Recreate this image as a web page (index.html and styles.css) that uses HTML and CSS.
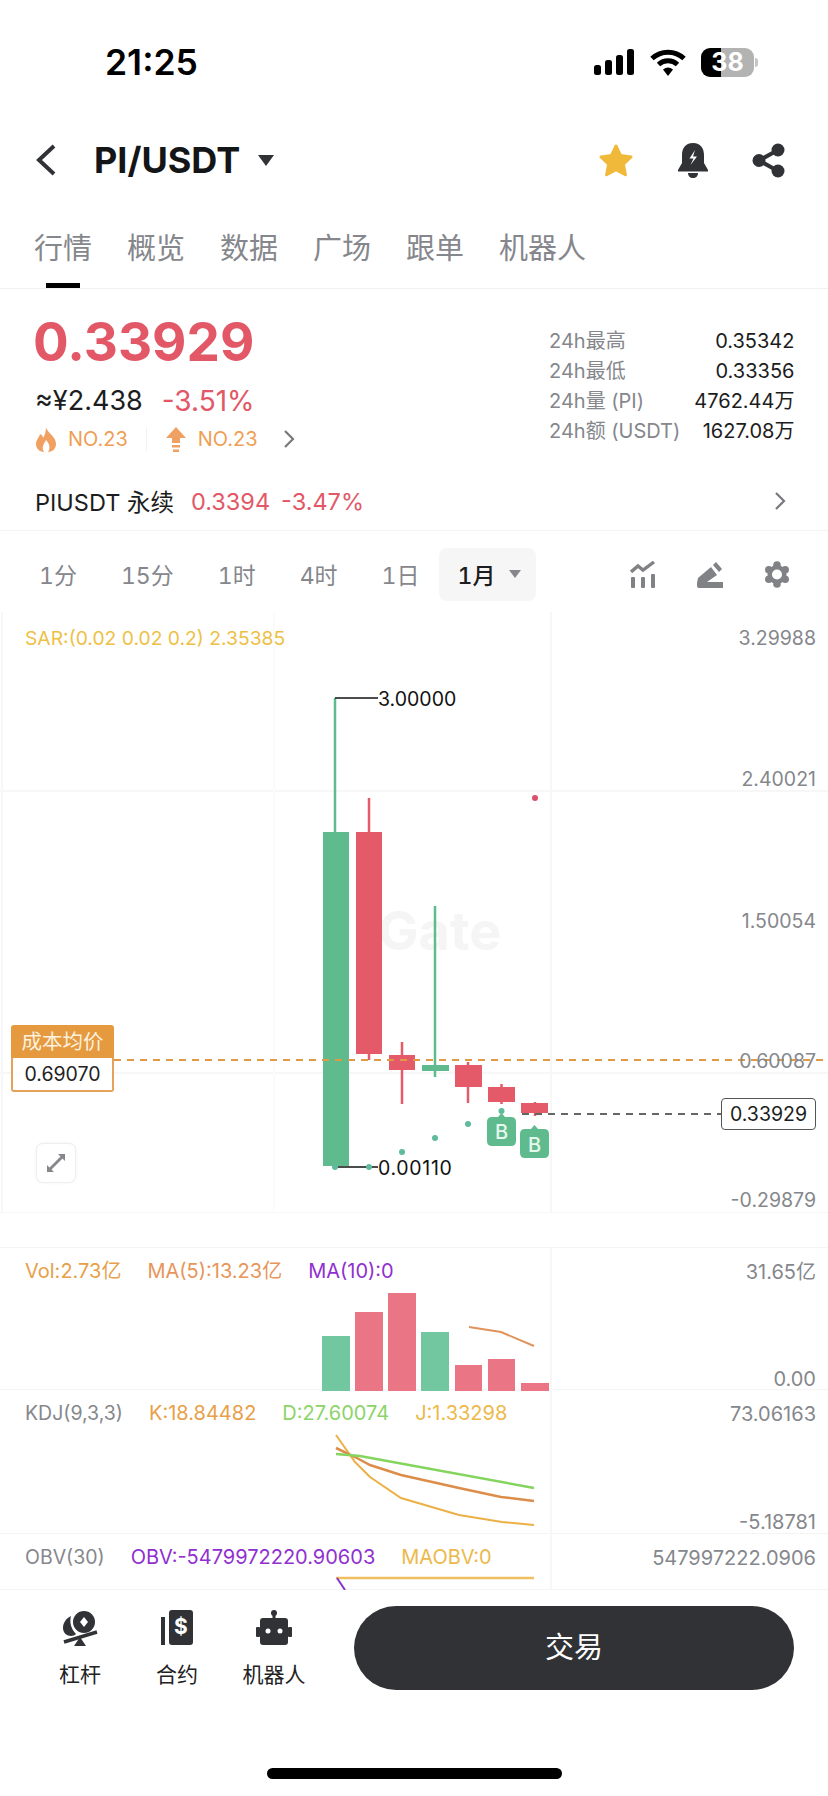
FILE: index.html
```html
<!DOCTYPE html>
<html lang="zh">
<head>
    <meta charset="UTF-8">
    <meta name="viewport" content="width=device-width, initial-scale=1.0">
    <title>PI/USDT</title>
    <link rel="stylesheet" href="styles.css">
</head>
<body>
    <div class="page">
        <div class="status">
            <span class="time">21:25</span>
            <div class="status-icons">
                <svg width="41" height="26" viewBox="0 0 41 26"><rect x="0" y="16" width="7" height="10" rx="2.5"/><rect x="11" y="11" width="7" height="15" rx="2.5"/><rect x="22" y="6" width="7" height="20" rx="2.5"/><rect x="33" y="0" width="7" height="26" rx="2.5"/></svg>
                <svg width="36" height="27" viewBox="0 0 36 27"><path d="M2 9.5C11 1 25 1 34 9.5" fill="none" stroke="#000" stroke-width="5"/><path d="M8.5 15.5C14 10.5 22 10.5 27.5 15.5" fill="none" stroke="#000" stroke-width="5"/><path d="M13 20.5Q18 16.5 23 20.5L18 27Z"/></svg>
                <div class="battery"><span class="battery-num">38</span></div>
                <span class="battery-nub"></span>
            </div>
        </div>

        <div class="nav">
            <svg class="back" width="22" height="32" viewBox="0 0 22 32"><path d="M19 2L4 16L19 30" fill="none" stroke="#303236" stroke-width="4"/></svg>
            <span class="pair">PI/USDT</span>
            <span class="caret"></span>
            <div class="nav-icons">
                <svg width="36" height="35" viewBox="0 0 36 35"><path d="M18 3L22.6 12.6L33 14L25.4 21.2L27.4 31.8L18 26.6L8.6 31.8L10.6 21.2L3 14L13.4 12.6Z" fill="#f0b93a" stroke="#f0b93a" stroke-width="3" stroke-linejoin="round"/></svg>
                <svg width="32" height="35" viewBox="0 0 32 35"><path d="M16 0C8 0 5 6 5 12V20L1 27V28.5H31V27L27 20V12C27 6 24 0 16 0Z" fill="#303236"/><path d="M11 30H21C21 33 19 35 16 35S11 33 11 30Z" fill="#303236"/><path d="M18 7L12.5 15.5H16.5L13.5 22L20 13.5H16Z" fill="#fff"/></svg>
                <svg width="33" height="35" viewBox="0 0 33 35"><path d="M26 7L7 17.5L26 28" fill="none" stroke="#303236" stroke-width="4"/><circle cx="26" cy="7" r="6.5" fill="#303236"/><circle cx="26" cy="28" r="6.5" fill="#303236"/><circle cx="7" cy="17.5" r="6.5" fill="#303236"/></svg>
            </div>
        </div>

        <div class="tabs">
            <span class="tab tab-active">行情</span>
            <span class="tab">概览</span>
            <span class="tab">数据</span>
            <span class="tab">广场</span>
            <span class="tab">跟单</span>
            <span class="tab">机器人</span>
        </div>

        <div class="summary">
            <div>
                <div class="price">0.33929</div>
                <div class="price-sub">
                    <span>≈¥2.438</span>
                    <span class="red">-3.51%</span>
                </div>
                <div class="rank">
                    <svg width="22" height="25" viewBox="0 0 22 25"><path d="M11 0C12 6 21 9 21 17C21 22 17 25 13 25C16 21 14 16 11 13C9 17 6 20 9 25C4 25 1 21 1 17C1 13 4 11 5 7C7 8 8 9 8 11C10 8 11 4 11 0Z" fill="#f0a060"/></svg>
                    <span>NO.23</span>
                    <span class="rank-sep"></span>
                    <svg width="22" height="25" viewBox="0 0 22 25"><path d="M11 0L21 11H15V16H7V11H1Z" fill="#f0a060"/><rect x="7" y="18" width="8" height="2.5" fill="#f0a060"/><rect x="8" y="22.5" width="6" height="2.5" fill="#f0a060"/></svg>
                    <span>NO.23</span>
                    <svg class="rank-more" width="13" height="18" viewBox="0 0 13 18"><path d="M2 1L10 9L2 17" fill="none" stroke="#77797e" stroke-width="2.2"/></svg>
                </div>
            </div>
            <div class="stats">
                <span class="stat-label">24h最高</span><span class="stat-value">0.35342</span>
                <span class="stat-label">24h最低</span><span class="stat-value">0.33356</span>
                <span class="stat-label">24h量 (PI)</span><span class="stat-value">4762.44万</span>
                <span class="stat-label">24h额 (USDT)</span><span class="stat-value">1627.08万</span>
            </div>
        </div>

        <div class="perp">
            <span class="perp-name">PIUSDT 永续</span>
            <span class="red">0.3394</span>
            <span class="red">-3.47%</span>
            <svg class="perp-more" width="13" height="18" viewBox="0 0 13 18"><path d="M2 1L10 9L2 17" fill="none" stroke="#77797e" stroke-width="2.2"/></svg>
        </div>

        <div class="intervals">
            <span>1分</span>
            <span>15分</span>
            <span>1时</span>
            <span>4时</span>
            <span>1日</span>
            <span class="interval-active">1月<i class="caret caret-small"></i></span>
            <div class="chart-tools">
                <svg width="26" height="27" viewBox="0 0 26 27"><path d="M1 11L8 5L13 9L24 1" fill="none" stroke="#808285" stroke-width="3.4"/><rect x="1" y="16" width="4" height="11" rx="1" fill="#808285"/><rect x="11" y="16" width="4" height="11" rx="1" fill="#808285"/><rect x="21" y="13" width="4" height="14" rx="1" fill="#808285"/></svg>
                <svg width="26" height="27" viewBox="0 0 26 27"><path d="M0 22L1 17L14 6L20 14L10 21H26V27H2Q0 27 0 25Z" fill="#808285"/><path d="M16 4L19 1L25 8L22 11Z" fill="#808285"/></svg>
                <svg width="26" height="27" viewBox="0 0 26 27"><g fill="#808285"><circle cx="13" cy="13.500" r="9.500"/><circle cx="13" cy="4" r="3.800"/><circle cx="13" cy="23" r="3.800"/><circle cx="4.800" cy="8.700" r="3.800"/><circle cx="21.200" cy="8.700" r="3.800"/><circle cx="4.800" cy="18.300" r="3.800"/><circle cx="21.200" cy="18.300" r="3.800"/></g><circle cx="13" cy="13.500" r="5" fill="#fff"/></svg>
            </div>
        </div>

        <div class="chart">
            <svg class="chart-layer" width="828" height="601" viewBox="0 612 828 601">
                <g stroke="#f7f7f7" stroke-width="2">
                    <line x1="0" y1="791" x2="828" y2="791"/>
                    <line x1="0" y1="1073" x2="828" y2="1073"/>
                    <line x1="0" y1="1213" x2="828" y2="1213"/>
                    <line x1="2" y1="612" x2="2" y2="1213"/>
                    <line x1="274" y1="612" x2="274" y2="1213" stroke="#fbfbfb"/>
                    <line x1="551" y1="612" x2="551" y2="1213"/>
                </g>
                <text class="watermark" x="378" y="950">Gate</text>

                <line x1="335" y1="698" x2="335" y2="832" stroke="#5fbb8d" stroke-width="2.500"/>
                <rect x="323" y="832" width="26" height="334" fill="#5fbb8d"/>
                <line x1="369" y1="798" x2="369" y2="1060" stroke="#e55a68" stroke-width="2.500"/>
                <rect x="356" y="832" width="26" height="222" fill="#e55a68"/>
                <line x1="402" y1="1042" x2="402" y2="1104" stroke="#e55a68" stroke-width="2.500"/>
                <rect x="389" y="1055" width="26" height="15" fill="#e55a68"/>
                <line x1="435" y1="906" x2="435" y2="1077" stroke="#5fbb8d" stroke-width="2.500"/>
                <rect x="422" y="1065" width="27" height="6" fill="#5fbb8d"/>
                <line x1="468" y1="1062" x2="468" y2="1103" stroke="#e55a68" stroke-width="2.500"/>
                <rect x="455" y="1065" width="27" height="22" fill="#e55a68"/>
                <line x1="501.500" y1="1084" x2="501.500" y2="1104" stroke="#e55a68" stroke-width="2.500"/>
                <rect x="488" y="1087" width="27" height="15" fill="#e55a68"/>
                <line x1="535" y1="1102" x2="535" y2="1116" stroke="#e55a68" stroke-width="2.500"/>
                <rect x="521" y="1103" width="27" height="10" fill="#e55a68"/>

                <line x1="335" y1="698" x2="378" y2="698" stroke="#111" stroke-width="1.500"/>
                <line x1="335" y1="1167" x2="378" y2="1167" stroke="#111" stroke-width="1.500"/>

                <g fill="#5fbb9a">
                    <circle cx="335" cy="1167" r="3"/>
                    <circle cx="369" cy="1167" r="3"/>
                    <circle cx="402" cy="1152" r="3"/>
                    <circle cx="435" cy="1138" r="3"/>
                    <circle cx="468" cy="1124" r="3"/>
                    <circle cx="501.500" cy="1111" r="3"/>
                </g>
                <circle cx="535" cy="798" r="3" fill="#d9506a"/>

                <line x1="114" y1="1060" x2="828" y2="1060" stroke="#e09a45" stroke-width="2" stroke-dasharray="7 6"/>
                <line x1="522" y1="1114" x2="721" y2="1114" stroke="#666" stroke-width="2" stroke-dasharray="7 6"/>

                <g fill="#5fbb8d">
                    <path d="M501.500 1113L505 1117H511Q516 1117 516 1122V1141Q516 1146 511 1146H492Q487 1146 487 1141V1122Q487 1117 492 1117H498Z"/>
                    <path d="M534.500 1125L538 1129H544Q549 1129 549 1134V1153Q549 1158 544 1158H525Q520 1158 520 1153V1134Q520 1129 525 1129H531Z"/>
                </g>
                <text class="badge-text" x="501.500" y="1139">B</text>
                <text class="badge-text" x="534.500" y="1151.500">B</text>
            </svg>

            <span class="legend-sar">SAR:(0.02 0.02 0.2) 2.35385</span>
            <span class="scale scale-1">3.29988</span>
            <span class="scale scale-2">2.40021</span>
            <span class="scale scale-3">1.50054</span>
            <span class="scale scale-4">0.60087</span>
            <span class="scale scale-5">-0.29879</span>
            <span class="extreme extreme-high">3.00000</span>
            <span class="extreme extreme-low">0.00110</span>
            <span class="last-price">0.33929</span>
            <div class="cost">
                <div class="cost-title">成本均价</div>
                <div class="cost-value">0.69070</div>
            </div>
            <div class="expand">
                <svg width="20" height="20" viewBox="0 0 20 20"><path d="M12 1H19V8L16.500 5.500L5.500 16.500L8 19H1V12L3.500 14.500L14.500 3.500Z" fill="#85878a"/></svg>
            </div>
        </div>

        <div class="pane pane-vol">
            <svg class="chart-layer" width="828" height="143" viewBox="0 1247 828 143">
                <line x1="551" y1="1247" x2="551" y2="1390" stroke="#f7f7f7" stroke-width="2"/>
                <rect x="322" y="1335" width="28" height="55" fill="#72c6a0"/>
                <rect x="355" y="1311" width="28" height="79" fill="#e97585"/>
                <rect x="388" y="1292" width="28" height="98" fill="#e97585"/>
                <rect x="421" y="1331" width="28" height="59" fill="#72c6a0"/>
                <rect x="455" y="1364" width="27" height="26" fill="#e97585"/>
                <rect x="488" y="1358" width="27" height="32" fill="#e97585"/>
                <rect x="521" y="1382" width="28" height="8" fill="#e97585"/>
                <path d="M469 1326L501 1331L534 1345" fill="none" stroke="#e0935a" stroke-width="2"/>
            </svg>
            <div class="legend">
                <span class="c-orange">Vol:2.73亿</span>
                <span class="c-salmon">MA(5):13.23亿</span>
                <span class="c-purple">MA(10):0</span>
            </div>
            <span class="pane-top">31.65亿</span>
            <span class="pane-bottom">0.00</span>
        </div>

        <div class="pane pane-kdj">
            <svg class="chart-layer" width="828" height="144" viewBox="0 1390 828 144">
                <line x1="551" y1="1390" x2="551" y2="1534" stroke="#f7f7f7" stroke-width="2"/>
                <path d="M336 1435L355 1462L370 1477L401 1498L459 1515L502 1522L534 1525" fill="none" stroke="#ecb046" stroke-width="2"/>
                <path d="M336 1448L355 1457L370 1465L401 1475L459 1488L501 1497L534 1501" fill="none" stroke="#dd8d4a" stroke-width="2.500"/>
                <path d="M336 1454L360 1456L534 1488" fill="none" stroke="#84d45e" stroke-width="2.500"/>
            </svg>
            <div class="legend">
                <span class="c-gray">KDJ(9,3,3)</span>
                <span class="c-orange">K:18.84482</span>
                <span class="c-green">D:27.60074</span>
                <span class="c-yellow">J:1.33298</span>
            </div>
            <span class="pane-top">73.06163</span>
            <span class="pane-bottom">-5.18781</span>
        </div>

        <div class="pane pane-obv">
            <svg class="chart-layer" width="828" height="56" viewBox="0 1534 828 56">
                <line x1="551" y1="1534" x2="551" y2="1590" stroke="#f7f7f7" stroke-width="2"/>
                <line x1="336" y1="1578" x2="534" y2="1578" stroke="#f0c060" stroke-width="2.500"/>
                <line x1="337" y1="1578" x2="345" y2="1590" stroke="#8a35c8" stroke-width="2"/>
            </svg>
            <div class="legend">
                <span class="c-gray">OBV(30)</span>
                <span class="c-purple">OBV:-5479972220.90603</span>
                <span class="c-yellow">MAOBV:0</span>
            </div>
            <span class="pane-top">547997222.0906</span>
        </div>

        <div class="toolbar">
            <div class="tools">
                <div class="tool">
                    <svg width="36" height="36" viewBox="0 0 36 36"><circle cx="22" cy="12" r="11" fill="#303236"/><path d="M22 7L26 12L22 17L18 12Z" fill="#fff"/><path d="M9 6C3 9 1 14 1 18C1 23 5 26 9 26C11 26 13 25 14 24C10 20 7 13 9 6Z" fill="#303236"/><path d="M2 32L35 22" stroke="#303236" stroke-width="3.500"/><path d="M12 36L18 27L24 36Z" fill="#303236"/></svg>
                    <span>杠杆</span>
                </div>
                <div class="tool">
                    <svg width="36" height="36" viewBox="0 0 36 36"><rect x="2" y="7" width="4" height="28" fill="#303236"/><rect x="10" y="0" width="24" height="35" rx="3" fill="#303236"/><text class="dollar" x="22" y="24">$</text></svg>
                    <span>合约</span>
                </div>
                <div class="tool">
                    <svg width="36" height="36" viewBox="0 0 36 36"><circle cx="18" cy="3" r="3" fill="#303236"/><rect x="16.500" y="3" width="3" height="6" fill="#303236"/><rect x="4" y="8" width="28" height="27" rx="3" fill="#303236"/><rect x="0" y="17" width="4" height="10" rx="1" fill="#303236"/><rect x="32" y="17" width="4" height="10" rx="1" fill="#303236"/><circle cx="12" cy="21" r="2.500" fill="#fff"/><circle cx="24" cy="21" r="2.500" fill="#fff"/></svg>
                    <span>机器人</span>
                </div>
            </div>
            <div class="trade-btn">交易</div>
        </div>
        <div class="home-bar"></div>
    </div>
</body>
</html>
```

FILE: styles.css
```css
* {
    box-sizing: border-box;
}
body {
    margin: 0;
    background-color: #fff;
    font-family: Inter, "Noto Sans CJK SC", sans-serif;
    color: #1c1d20;
}
.page {
    width: 828px;
    height: 1796px;
    overflow: hidden;
}
.red {
    color: #e25867;
}

/* status bar */
.status {
    height: 124px;
    display: flex;
    align-items: center;
    justify-content: space-between;
    padding: 0 70px 0 105px;
}
.time {
    font-size: 35.500px;
    font-weight: 600;
    color: #000;
}
.status-icons {
    display: flex;
    align-items: center;
    gap: 15px;
}
.battery {
    position: relative;
    width: 53px;
    height: 29px;
    border-radius: 9px;
    overflow: hidden;
    background: linear-gradient(to right, #000 38%, #b3b3b3 38%);
    display: flex;
    align-items: center;
    justify-content: center;
}
.battery-num {
    color: #fff;
    font-size: 25px;
    font-weight: 700;
}
.battery-nub {
    width: 3px;
    height: 9px;
    margin-left: -14px;
    background-color: #c4c4c4;
    border-radius: 0 3px 3px 0;
}

/* nav */
.nav {
    height: 72px;
    display: flex;
    align-items: center;
    padding: 0 43px 0 35px;
}
.pair {
    margin-left: 37px;
    font-size: 36px;
    font-weight: 700;
    color: #141517;
}
.caret {
    width: 0;
    height: 0;
    margin-left: 18px;
    border-left: 8px solid transparent;
    border-right: 8px solid transparent;
    border-top: 11px solid #303236;
}
.nav-icons {
    margin-left: auto;
    display: flex;
    align-items: center;
    gap: 43px;
}

/* tabs */
.tabs {
    height: 93px;
    display: flex;
    gap: 35px;
    padding: 38px 0 0 34px;
    border-bottom: 1px solid #f1f1f1;
}
.tab {
    position: relative;
    height: 54px;
    font-size: 29px;
    line-height: 30px;
    color: #85878c;
}
.tab-active::after {
    content: "";
    position: absolute;
    left: 12px;
    bottom: 0;
    width: 34px;
    height: 5px;
    background-color: #000;
}

/* price summary */
.summary {
    height: 183px;
    display: flex;
    justify-content: space-between;
    padding: 26px 36px 0 35px;
}
.price {
    margin-left: -2px;
    font-size: 53px;
    line-height: 54px;
    font-weight: 700;
    color: #e25867;
}
.price-sub {
    display: flex;
    gap: 19px;
    margin-top: 17px;
    font-size: 27px;
    line-height: 30px;
}
.price-sub .red {
    font-size: 28px;
}
.rank {
    display: flex;
    align-items: center;
    margin-top: 10px;
    height: 26px;
    font-size: 20px;
    color: #ee9f55;
    gap: 11px;
}
.rank-sep {
    width: 1px;
    height: 24px;
    margin: 0 7px 0 7px;
    background-color: #f2f2f2;
}
.rank-more {
    margin-left: 14px;
}
.stats {
    display: grid;
    grid-template-columns: auto 1fr;
    grid-auto-rows: 30px;
    column-gap: 14px;
    width: 243px;
    margin-top: 11px;
    font-size: 20px;
    line-height: 30px;
    white-space: nowrap;
}
.stat-label {
    color: #85878c;
}
.stat-value {
    text-align: right;
    color: #1c1d20;
}

/* perpetual row */
.perp {
    height: 59px;
    display: flex;
    align-items: center;
    padding: 0 41px 0 35px;
    font-size: 23.500px;
    gap: 11px;
    border-bottom: 1px solid #f4f4f4;
}
.perp-name {
    margin-right: 6px;
}
.perp-more {
    margin-left: auto;
}

/* interval selector */
.intervals {
    height: 81px;
    display: flex;
    align-items: center;
    gap: 44px;
    padding: 5px 38px 0 39px;
    font-size: 23px;
    font-variant-numeric: tabular-nums;
    color: #85878c;
}
.interval-active {
    display: flex;
    align-items: center;
    height: 53px;
    margin-left: -25px;
    padding: 0 15px 0 19px;
    background-color: #f6f6f6;
    border-radius: 8px;
    color: #1c1d20;
    font-weight: 500;
}
.caret-small {
    margin-left: 14px;
    border-left-width: 6px;
    border-right-width: 6px;
    border-top-width: 8px;
    border-top-color: #85878c;
}
.chart-tools {
    margin-left: auto;
    display: flex;
    align-items: center;
    gap: 41px;
}

/* candle chart */
.chart {
    position: relative;
    height: 601px;
    font-size: 19.500px;
}
.chart-layer {
    position: absolute;
    left: 0;
    top: 0;
}
.watermark {
    font-size: 54px;
    font-weight: 700;
    fill: #f5f5f5;
}
.badge-text {
    font-size: 20px;
    font-weight: 500;
    text-anchor: middle;
    fill: #e6f7ee;
}
.legend-sar {
    position: absolute;
    left: 25px;
    top: 14px;
    font-size: 19.300px;
    color: #eebf45;
}
.scale {
    position: absolute;
    right: 12px;
    line-height: 24px;
    color: #85878c;
}
.scale-1 { top: 14px; }
.scale-2 { top: 155px; }
.scale-3 { top: 297px; }
.scale-4 { top: 437px; }
.scale-5 { top: 576px; }
.extreme {
    position: absolute;
    left: 378px;
    line-height: 24px;
    color: #111;
}
.extreme-high { top: 75px; }
.extreme-low {
    top: 544px;
    letter-spacing: 0.7px;
}
.last-price {
    position: absolute;
    left: 721px;
    top: 486px;
    width: 95px;
    height: 32px;
    line-height: 30px;
    text-align: center;
    background-color: #fff;
    border: 1px solid #555;
    border-radius: 4px;
}
.cost {
    position: absolute;
    left: 11px;
    top: 413px;
    width: 103px;
    text-align: center;
    line-height: 33px;
}
.cost-title {
    height: 33px;
    background-color: #e59a3f;
    border-radius: 3px 3px 0 0;
    color: #fdf1df;
    font-size: 20.500px;
}
.cost-value {
    height: 34px;
    background-color: #fff;
    border: 2px solid #e3a35a;
    border-top: none;
    border-radius: 0 0 3px 3px;
    color: #222;
}
.expand {
    position: absolute;
    left: 36px;
    top: 531px;
    width: 40px;
    height: 40px;
    display: flex;
    align-items: center;
    justify-content: center;
    background-color: #fff;
    border: 1px solid #eee;
    border-radius: 7px;
    box-shadow: 0 0 3px rgba(0,0,0,0.06);
}

/* indicator panes */
.pane {
    position: relative;
    font-size: 20px;
    border-bottom: 1px solid #f4f4f4;
}
.pane-vol {
    height: 143px;
    margin-top: 34px;
    border-top: 1px solid #f4f4f4;
}
.pane-kdj {
    height: 144px;
}
.pane-obv {
    height: 56px;
}
.legend {
    position: relative;
    display: flex;
    gap: 26px;
    padding: 11px 0 0 25px;
    line-height: 24px;
}
.pane-top,
.pane-bottom {
    position: absolute;
    right: 12px;
    line-height: 24px;
    color: #85878c;
}
.pane-top {
    top: 12px;
}
.pane-bottom {
    bottom: -2px;
}
.pane-kdj .pane-bottom {
    bottom: -1px;
}
.c-gray {
    font-size: 19.500px;
    color: #85878c;
}
.c-orange { color: #e8a048; }
.c-salmon { color: #e8955a; }
.c-purple { color: #9030d0; }
.c-green { color: #8cd468; }
.c-yellow { color: #ecb94a; }

/* bottom bar */
.toolbar {
    height: 178px;
    display: flex;
    align-items: flex-start;
    padding: 16px 34px 0 48px;
    background-color: #fff;
}
.tools {
    display: flex;
    gap: 33px;
}
.tool {
    width: 64px;
    padding-top: 4px;
    display: flex;
    flex-direction: column;
    align-items: center;
    gap: 15px;
    font-size: 21px;
    line-height: 28px;
    color: #222;
    white-space: nowrap;
}
.dollar {
    font-size: 21px;
    font-weight: 700;
    text-anchor: middle;
    fill: #fff;
}
.trade-btn {
    margin-left: auto;
    width: 440px;
    height: 84px;
    border-radius: 42px;
    background-color: #303236;
    color: #fff;
    font-size: 29px;
    line-height: 84px;
    text-align: center;
}
.home-bar {
    width: 295px;
    height: 11px;
    margin-left: 267px;
    background-color: #000;
    border-radius: 6px;
}
```
